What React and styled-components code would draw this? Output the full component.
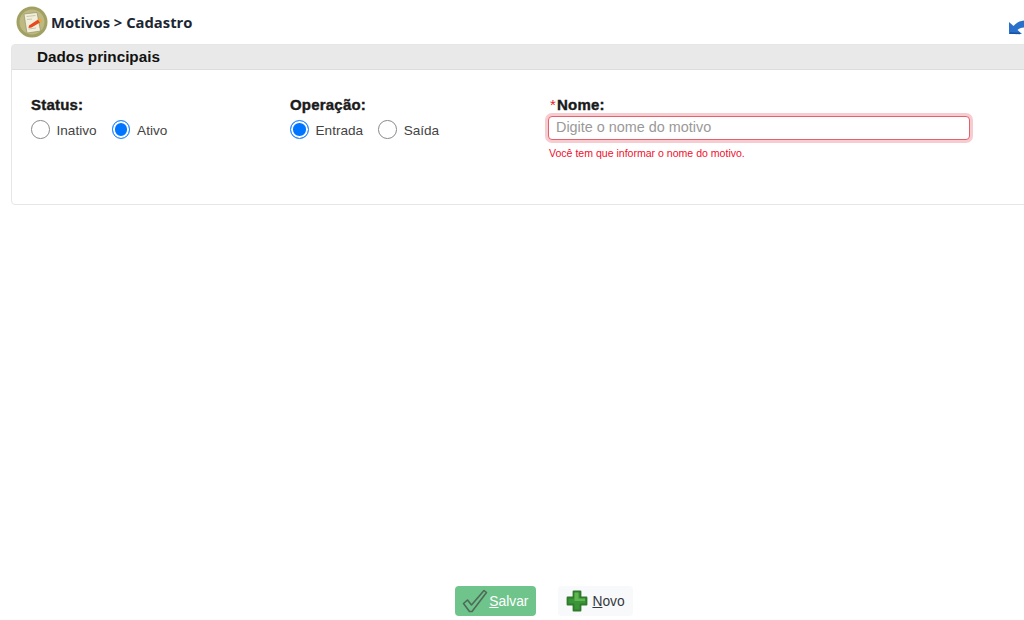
import React from 'react';
import styled, { createGlobalStyle } from 'styled-components';

const Global = createGlobalStyle`
  html, body {
    margin: 0;
    padding: 0;
    background: #fff;
    overflow: hidden;
  }
  body {
    font-family: "Liberation Sans", Arial, sans-serif;
    color: #212529;
  }
`;

const Page = styled.div`
  width: 1040px;
  height: 620px;
  display: flex;
  flex-direction: column;
`;

const Header = styled.div`
  height: 44px;
  display: flex;
  align-items: center;
  padding: 0 0 0 16px;
  position: relative;
`;

const Title = styled.h1`
  margin: 0 0 0 3px;
  font-family: "Open Sans", sans-serif;
  font-size: 14.8px;
  font-weight: 700;
  color: #1c2733;
`;

const BackIcon = styled.svg`
  position: absolute;
  left: 1008px;
  top: 18px;
`;

const Panel = styled.section`
  margin-left: 11px;
  height: 161px;
  border: 1px solid #e6e6e6;
  border-radius: 4px;
  box-sizing: border-box;
`;

const PanelHead = styled.div`
  height: 24px;
  background: #e9e9e9;
  border-bottom: 1px solid #dcdcdc;
  padding-left: 25px;
  font-size: 15.25px;
  font-weight: 700;
  line-height: 24px;
  color: #111;
`;

const Fields = styled.div`
  display: grid;
  grid-template-columns: 259px 258px 422px;
  padding: 27px 0 0 19px;
`;

const Label = styled.div`
  font-size: 15px;
  font-weight: 700;
  line-height: 16px;
  height: 16px;
  letter-spacing: 0.2px;
  color: #1a1a1a;
  -webkit-text-stroke: 0.4px #1a1a1a;
`;

const Required = styled.span`
  color: #e8202f;
  font-weight: 400;
  margin-right: 1px;
  -webkit-text-stroke: 0;
`;

const Radios = styled.div`
  display: flex;
  gap: 15px;
  margin-top: 8px;
`;

const RadioItem = styled.label`
  display: flex;
  align-items: flex-start;
  gap: 7px;
  font-size: 13.6px;
  line-height: 20px;
  color: #444;
`;

const RadioDot = styled.span`
  width: 18.5px;
  height: 18.5px;
  margin-top: -1px;
  box-sizing: border-box;
  border-radius: 50%;
  border: 1.5px solid ${(p) => (p.$on ? '#2a8bff' : '#8a8a8a')};
  background: ${(p) => (p.$on ? '#0075ff' : '#fff')};
  box-shadow: ${(p) => (p.$on ? 'inset 0 0 0 2px #fff' : 'none')};
`;

const NameLabel = styled(Label)`
  margin-left: 2px;
`;

const Input = styled.input`
  display: block;
  box-sizing: border-box;
  width: 422px;
  height: 24px;
  margin-top: 3px;
  padding: 0 7px 2px;
  border: 1px solid #e4606d;
  border-radius: 4px;
  box-shadow: 0 0 0 3px rgba(220, 53, 69, 0.25);
  font-family: inherit;
  font-size: 14.4px;
  color: #333;
  outline: none;

  &::placeholder {
    color: #999;
    opacity: 1;
  }
`;

const ErrorText = styled.div`
  margin: 7px 0 0 1px;
  font-size: 10.55px;
  line-height: 12px;
  color: #f0102c;
`;

const Footer = styled.div`
  width: 1024px;
  box-sizing: border-box;
  margin-top: 381px;
  padding-left: 64px;
  display: flex;
  justify-content: center;
  gap: 22px;
`;

const ActionButton = styled.button`
  display: flex;
  align-items: center;
  gap: ${(p) => (p.$primary ? '1px' : '4px')};
  height: 30px;
  box-sizing: border-box;
  padding: ${(p) => (p.$primary ? '0 8px 0 7px' : '0 8px')};
  border: none;
  border-radius: 4px;
  background: ${(p) => (p.$primary ? '#6fc48b' : '#f8f9fa')};
  color: ${(p) => (p.$primary ? '#fff' : '#33393f')};
  font-family: inherit;
  font-size: 13.8px;

  u {
    text-underline-offset: 1px;
  }
`;

function Radio({ on, children }) {
  return (
    <RadioItem>
      <RadioDot $on={on} />
      {children}
    </RadioItem>
  );
}

function NoteLogo() {
  return (
    <svg width="32" height="32" viewBox="0 0 32 32">
      <circle cx="16" cy="16" r="15.5" fill="#a3a063" />
      <circle cx="16" cy="16" r="12.5" fill="#bdb982" />
      <path d="M8 8 L21 6.5 L24.5 25 L11 27 Z" fill="#f1efdc" stroke="#8d8a5e" strokeWidth="0.6" />
      <path d="M10.5 10.5 L19.5 9.5 M11 13.5 L16 13 M12.5 23 L20 22" stroke="#c9c7aa" strokeWidth="1" />
      <path d="M13 19.5 L22 13.5 L24 16.5 L15.5 21.5 L12.5 22 Z" fill="#e8481c" />
      <path d="M22 13.5 L24 12.3 L26 15 L24 16.5 Z" fill="#f2a23a" />
    </svg>
  );
}

function CheckIcon() {
  return (
    <svg width="26" height="26" viewBox="0 0 26 26">
      <path
        d="M1.5 15.5 L5.5 12 L9.5 17 L22 2.5 L24.5 4.5 L10 23.5 L7.5 23.5 Z"
        fill="none"
        stroke="#4f6a58"
        strokeWidth="1.6"
        strokeLinejoin="round"
      />
    </svg>
  );
}

function PlusIcon() {
  return (
    <svg width="22" height="22" viewBox="0 0 22 22">
      <path
        d="M7.5 1.5 H14.5 V7.5 H20.5 V14.5 H14.5 V20.5 H7.5 V14.5 H1.5 V7.5 H7.5 Z"
        fill="#3a9438"
        stroke="#2f7a2d"
        strokeWidth="1.8"
        strokeLinejoin="round"
      />
      <path d="M8.5 2.5 H12.5 V8.5 H19 V11 H8.5 Z" fill="#5fb84f" />
    </svg>
  );
}

function App() {
  return (
    <Page>
      <Global />
      <Header>
        <NoteLogo />
        <Title>Motivos &gt; Cadastro</Title>
        <BackIcon width="16" height="18" viewBox="0 0 16 18">
          <path d="M1 4 L1 16 L14 16 L9.5 12 C11 10.5 13 9.5 16 9.5 L16 2.5 C11 3 8 5 5.5 8 Z" fill="#2a6fc9" />
          <path d="M2 15 L12 15.5" stroke="#16509f" strokeWidth="1.5" />
        </BackIcon>
      </Header>
      <Panel>
        <PanelHead>Dados principais</PanelHead>
        <Fields>
          <div>
            <Label>Status:</Label>
            <Radios>
              <Radio>Inativo</Radio>
              <Radio on>Ativo</Radio>
            </Radios>
          </div>
          <div>
            <Label>Operação:</Label>
            <Radios>
              <Radio on>Entrada</Radio>
              <Radio>Saída</Radio>
            </Radios>
          </div>
          <div>
            <NameLabel><Required>*</Required>Nome:</NameLabel>
            <Input placeholder="Digite o nome do motivo" />
            <ErrorText>Você tem que informar o nome do motivo.</ErrorText>
          </div>
        </Fields>
      </Panel>
      <Footer>
        <ActionButton $primary>
          <CheckIcon />
          <span><u>S</u>alvar</span>
        </ActionButton>
        <ActionButton>
          <PlusIcon />
          <span><u>N</u>ovo</span>
        </ActionButton>
      </Footer>
    </Page>
  );
}

export default App;
